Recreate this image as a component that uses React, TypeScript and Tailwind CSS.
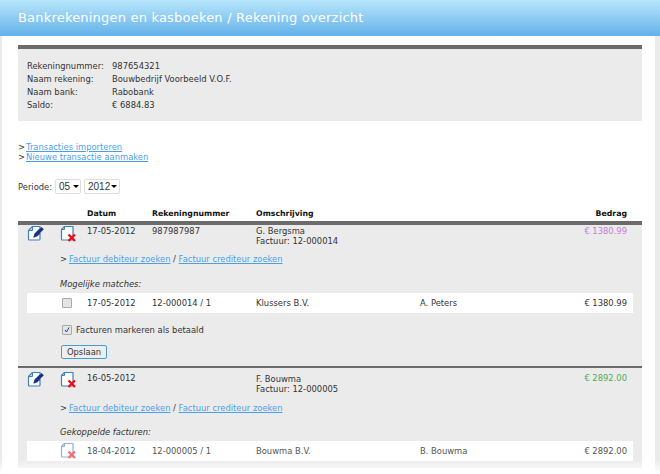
import { ReactNode } from 'react';

function EditIcon() {
  return (
    <svg width="17" height="17" viewBox="0 0 17 17" className="block">
      <path d="M5.500 1.500H13V4L8 9l-1 3 3-1 3-3v6a1 1 0 0 1-1 1H2.500a1 1 0 0 1-1-1V5.500z" fill="#fff" stroke="#3f7fc0" strokeWidth="1.200" strokeLinejoin="round" />
      <path d="M5.500 1.500V5.500H1.500z" fill="#a9cfee" stroke="#3f7fc0" strokeWidth="1" strokeLinejoin="round" />
      <path d="M6.500 12.500l1.200-3.800 6.800-6.800 2.300 2.300-6.800 6.800z" fill="#1f2f77" />
    </svg>
  );
}

function DeleteIcon({ faded }: { faded?: boolean }) {
  return (
    <svg width="17" height="18" viewBox="0 0 17 18" className={faded ? 'block opacity-60' : 'block'}>
      <path d="M4.500 1.500H13V14a1 1 0 0 1-1 1H2.500a1 1 0 0 1-1-1V4.500z" fill="#fff" stroke="#3f7fc0" strokeWidth="1.200" strokeLinejoin="round" />
      <path d="M4.500 1.500V4.500H1.500z" fill="#a9cfee" stroke="#3f7fc0" strokeWidth="1" strokeLinejoin="round" />
      <path d="M8.500 9.500l6.500 6.500M15 9.500l-6.500 6.500" stroke="#e8101c" strokeWidth="2.400" />
    </svg>
  );
}

function Links({ className }: { className: string }) {
  return (
    <div className={`${className} flex whitespace-pre pl-[42px] leading-[12px] text-[#333]`}>
      <span className="w-[9px]">&gt;</span>
      <a className="text-[#4b9fe8] underline">Factuur debiteur zoeken</a>
      <span> / </span>
      <a className="text-[#4b9fe8] underline">Factuur crediteur zoeken</a>
    </div>
  );
}

function Info({ label, value }: { label: string; value: string }) {
  return (
    <div className="flex h-[13px] leading-[13px]">
      <span className="w-[85px]">{label}</span>
      <span>{value}</span>
    </div>
  );
}

function SubRow({ first, date, nr, company, person, amount, muted }: { first: ReactNode; date: string; nr: string; company: string; person: string; amount: string; muted?: boolean }) {
  return (
    <div className={`mt-[3px] ml-[9px] mr-[9px] flex h-[20px] items-center bg-white ${muted ? 'text-[#555]' : 'text-[#333]'}`}>
      <div className="w-[60px] pl-[35px]">{first}</div>
      <div className="w-[65px]">{date}</div>
      <div className="w-[104px]">{nr}</div>
      <div className="w-[164px]">{company}</div>
      <div className="w-[100px]">{person}</div>
      <div className="ml-auto pr-[6px]">{amount}</div>
    </div>
  );
}

export default function App() {
  return (
    <div className="relative h-[474px] w-[660px] overflow-hidden bg-[#ebebeb] font-['DejaVu_Sans',sans-serif] text-[8.400px] text-[#333]">
      <div className="flex h-[36px] items-center bg-gradient-to-b from-[#b8e6fc] to-[#62b1e8] pl-[18px] text-[13px] tracking-[0.2px] text-white">
        Bankrekeningen en kasboeken / Rekening overzicht
      </div>

      <div className="ml-[2px] mr-[5px] h-[438px] bg-white pl-[16px] pr-[13px] pt-[9px]">
        {/* rekening info */}
        <div className="h-[76px] w-[624px] border-t-[4px] border-[#6b6b6b] bg-[#ebebeb] pl-[9px] pt-[11px]">
          <Info label="Rekeningnummer:" value="987654321" />
          <Info label="Naam rekening:" value="Bouwbedrijf Voorbeeld V.O.F." />
          <Info label="Naam bank:" value="Rabobank" />
          <Info label="Saldo:" value="€ 6884.83" />
        </div>

        <div className="mt-[22px] leading-[9.500px]">
          <div className="flex"><span className="w-[8px]">&gt;</span><a className="text-[#4b9fe8] underline">Transacties importeren</a></div>
          <div className="flex"><span className="w-[8px]">&gt;</span><a className="text-[#4b9fe8] underline">Nieuwe transactie aanmaken</a></div>
        </div>

        <div className="mt-[16px] flex h-[16px] items-center">
          <span className="mt-[3px] w-[37px]">Periode:</span>
          <div className="flex h-[15px] w-[26px] items-center justify-between rounded-[2px] border border-[#ddd] bg-white pl-[3px] pr-[1px] font-['Liberation_Sans',sans-serif] text-[10px]">
            05<i className="border-x-[3px] border-t-[3px] border-x-transparent border-t-black" />
          </div>
          <div className="ml-[3px] flex h-[15px] w-[36px] items-center justify-between rounded-[2px] border border-[#ddd] bg-white pl-[3px] pr-[2px] font-['Liberation_Sans',sans-serif] text-[10px]">
            2012<i className="border-x-[3px] border-t-[3px] border-x-transparent border-t-black" />
          </div>
        </div>

        {/* tabel kop */}
        <div className="mt-[12px] flex h-[15px] items-center text-[7.800px] font-bold text-[#111]">
          <div className="w-[69px]" />
          <div className="w-[65px]">Datum</div>
          <div className="w-[104px]">Rekeningnummer</div>
          <div>Omschrijving</div>
          <div className="ml-auto pr-[15px]">Bedrag</div>
        </div>

        {/* transactie 1 */}
        <div className="h-[145px] border-t-[4px] border-[#6b6b6b] bg-[#ebebeb]">
          <div className="flex h-[26px]">
            <div className="w-[33px] pl-[9px]"><EditIcon /></div>
            <div className="w-[36px] pl-[9px]"><DeleteIcon /></div>
            <div className="w-[65px] leading-[12px]">17-05-2012</div>
            <div className="w-[104px] leading-[12px]">987987987</div>
            <div className="pt-[2px] leading-[9.500px]">G. Bergsma<br />Factuur: 12-000014</div>
            <div className="ml-auto pr-[15px] leading-[12px] text-[#c77ad6]">€ 1380.99</div>
          </div>
          <Links className="mt-[2px]" />
          <div className="mt-[13px] pl-[42px] italic leading-[12px]">Mogelijke matches:</div>
          <SubRow
            first={<span className="block h-[10px] w-[10px] rounded-[1px] border border-[#aaa] bg-[#e4e4e4]" />}
            date="17-05-2012" nr="12-000014 / 1" company="Klussers B.V." person="A. Peters" amount="€ 1380.99"
          />
          <div className="mt-[11px] flex h-[12px] items-center pl-[44px]">
            <span className="mr-[4px] flex h-[10px] w-[10px] items-center justify-center rounded-[1px] border border-[#aaa] bg-[#e4e4e4]">
              <svg width="6" height="6" viewBox="0 0 6 6"><path d="M1 3l1.500 2 2.500-4.500" fill="none" stroke="#2a3fa0" strokeWidth="1" /></svg>
            </span>
            Facturen markeren als betaald
          </div>
          <div className="mt-[9px] ml-[43px] flex h-[14px] w-[46px] items-center justify-center rounded-[2px] border border-[#4a9ccc] bg-[#eeeeee]">Opslaan</div>
        </div>

        {/* transactie 2 */}
        <div className="h-[102px] border-t-2 border-[#6b6b6b] bg-[#ebebeb]">
          <div className="flex h-[26px] pt-[3px]">
            <div className="w-[33px] pl-[9px]"><EditIcon /></div>
            <div className="w-[36px] pl-[9px]"><DeleteIcon /></div>
            <div className="w-[169px] pt-[1px] leading-[12px]">16-05-2012</div>
            <div className="pt-[4px] leading-[9.500px]">F. Bouwma<br />Factuur: 12-000005</div>
            <div className="ml-auto pr-[15px] pt-[1px] leading-[12px] text-[#4fae4f]">€ 2892.00</div>
          </div>
          <Links className="mt-[8px]" />
          <div className="mt-[13px] pl-[42px] italic leading-[11px]">Gekoppelde facturen:</div>
          <SubRow
            first={<span className="-ml-[2px] block"><DeleteIcon faded /></span>}
            date="18-04-2012" nr="12-000005 / 1" company="Bouwma B.V." person="B. Bouwma" amount="€ 2892.00" muted
          />
        </div>
      </div>

      {/* fade onderaan */}
      <div className="absolute bottom-0 left-0 h-[14px] w-full bg-gradient-to-b from-transparent to-white" />
    </div>
  );
}
